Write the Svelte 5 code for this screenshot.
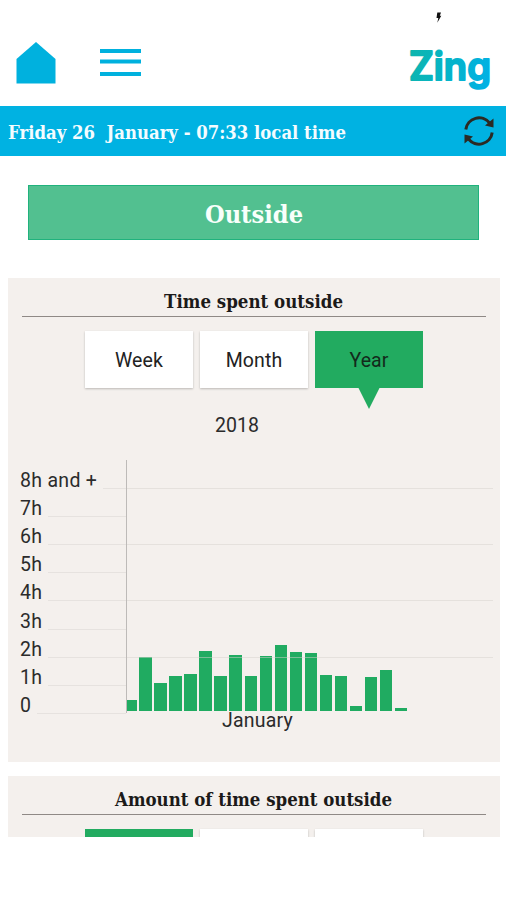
<script lang="ts">
  const periods = ["Week", "Month", "Year"];
  const hours = ["8h and +", "7h", "6h", "5h", "4h", "3h", "2h", "1h", "0"];

  // bar heights in px, one hour is 28px
  const days = [
    11, 54.5, 28, 35.5, 37.5, 60.5, 35.5, 56.5, 35, 55, 66.5, 59, 58, 36.5,
    35.5, 5.5, 34, 41, 3.5,
  ];

  let selected = "Year";
  let amountSelected = "Week";
</script>

<main>
  <div class="status">
    <svg width="8" height="12" viewBox="0 0 8 12">
      <path d="M2.3 .5H6L4.8 3.7H6.3L2.3 10.8L3.3 6H1.5z" fill="#111" />
    </svg>
  </div>

  <header>
    <svg class="home" width="40" height="42" viewBox="0 0 40 42">
      <path d="M20 0L39.5 17V41.500H0.500V17z" fill="#00b1de" />
    </svg>
    <svg class="menu" width="41" height="30" viewBox="0 0 41 30">
      <path d="M0 3H41M0 13.500H41M0 26H41" stroke="#00b1de" stroke-width="4" />
    </svg>
    <svg class="logo" width="90" height="52" viewBox="0 0 90 52">
      <defs>
        <linearGradient id="zing" gradientUnits="userSpaceOnUse" x1="5" y1="0" x2="88" y2="20">
          <stop offset="0" stop-color="#0fb5ab" />
          <stop offset="0.5" stop-color="#05b4c8" />
          <stop offset="1" stop-color="#00b1e4" />
        </linearGradient>
      </defs>
      <text
        x="5"
        y="35.500"
        textLength="82"
        lengthAdjust="spacingAndGlyphs"
        fill="url(#zing)"
        stroke="url(#zing)">Zing</text
      >
    </svg>
  </header>

  <div class="date">
    <svg class="slab" width="350" height="40">
      <text x="0" y="28" textLength="338" lengthAdjust="spacingAndGlyphs"
        >Friday 26&nbsp; January - 07:33 local time</text
      >
    </svg>
    <svg class="refresh" width="32" height="32" viewBox="0 0 32 32">
      <g fill="none" stroke="#2b2a24" stroke-width="3">
        <path d="M2.800 14.500A13.300 13.300 0 0 1 26.500 8" />
        <path d="M29.200 17.500A13.300 13.300 0 0 1 5.500 24" />
      </g>
      <path d="M30.500 3.500V12.500L22 10.500zM1.500 28.500V19.500L10 21.500z" fill="#2b2a24" />
    </svg>
  </div>

  <div class="content">
    <div class="banner">
      <svg class="slab" width="110" height="44">
        <text x="6" y="32" textLength="98" lengthAdjust="spacingAndGlyphs">Outside</text>
      </svg>
    </div>

    <section class="card">
      <h2>
        <svg class="slab" width="200" height="36">
          <text x="10" y="28" textLength="179" lengthAdjust="spacingAndGlyphs"
            >Time spent outside</text
          >
        </svg>
      </h2>
      <div class="tabs">
        {#each periods as period}
          <button class:active={period === selected} on:click={() => (selected = period)}>
            {period}
          </button>
        {/each}
      </div>
      <div class="year">2018</div>

      <div class="chart">
        <div class="hours">
          {#each hours as hour}
            <div class="hour"><span>{hour}</span><i></i></div>
          {/each}
        </div>
        <div class="plot">
          <div class="bars">
            {#each days as height}
              <div class="bar" style="height: {height}px"></div>
            {/each}
          </div>
          <div class="lines"><i></i><i></i><i></i><i></i></div>
        </div>
      </div>
      <div class="month">January</div>
    </section>

    <section class="card">
      <h2>
        <svg class="slab" width="300" height="36">
          <text x="11" y="28" textLength="277" lengthAdjust="spacingAndGlyphs"
            >Amount of time spent outside</text
          >
        </svg>
      </h2>
      <div class="tabs">
        {#each periods as period}
          <button
            class:active={period === amountSelected}
            on:click={() => (amountSelected = period)}
          >
            {period}
          </button>
        {/each}
      </div>
    </section>
  </div>
</main>

<style>
  :global(body) {
    margin: 0;
    background: #fff;
  }

  main {
    width: 506px;
    height: 900px;
    overflow: hidden;
    font-family: Roboto, sans-serif;
    font-size: 19.5px;
    color: #2b2b2b;
  }

  svg {
    display: block;
    flex: none;
    overflow: visible;
  }

  .status {
    display: flex;
    justify-content: flex-end;
    height: 30px;
    padding: 12px 63px 0 0;
    box-sizing: border-box;
  }

  header {
    display: flex;
    align-items: flex-start;
    height: 76px;
    padding: 12px 12px 0 16px;
    box-sizing: border-box;
  }

  .menu {
    margin: 6px 0 0 44px;
  }

  .logo {
    margin: 2px 0 0 auto;
  }

  .logo text {
    font: 600 39px Inter, sans-serif;
    stroke-width: 2;
    stroke-linejoin: round;
  }

  .slab text {
    font: 700 18px "DejaVu Serif", serif;
    fill: #1c1a19;
  }

  .date {
    display: flex;
    align-items: center;
    justify-content: space-between;
    height: 50px;
    padding: 0 11px 0 8px;
    background: #00b2e2;
  }

  .date .slab text {
    fill: #f4fcff;
  }

  .content {
    height: 681px;
    padding: 29px 6px 0 8px;
    box-sizing: border-box;
    overflow: hidden;
  }

  .banner {
    display: flex;
    align-items: center;
    justify-content: center;
    height: 55px;
    margin: 0 21px 38px 20px;
    border: 1px solid #20b27d;
    box-sizing: border-box;
    background: #52c090;
  }

  .banner .slab text {
    font-size: 24px;
    fill: #f8fffb;
  }

  .card {
    height: 484px;
    margin-bottom: 14px;
    background: #f4f0ed;
    overflow: hidden;
  }

  h2 {
    display: flex;
    justify-content: center;
    height: 39px;
    margin: 0 14px 14px;
    padding-top: 2px;
    border-bottom: 1px solid #8f8986;
    box-sizing: border-box;
  }

  .tabs {
    display: flex;
    justify-content: center;
    gap: 7px;
  }

  button {
    position: relative;
    width: 108px;
    height: 57px;
    padding: 2px 0 0;
    border: 0;
    background: #fff;
    color: #222;
    font: 19.5px Roboto, sans-serif;
    letter-spacing: 0.1px;
    box-shadow: 0 1px 2px #bbb8b5;
  }

  button.active {
    background: #22ab60;
    color: #13291b;
    box-shadow: none;
  }

  button.active::after {
    content: "";
    position: absolute;
    top: 56px;
    left: 43px;
    border: solid transparent;
    border-width: 22px 11px 0;
    border-top-color: #22ab60;
  }

  .year {
    height: 47px;
    margin: 25px 34px 0 0;
    line-height: 26px;
    text-align: center;
  }

  .chart {
    display: flex;
    height: 253px;
  }

  .hours {
    width: 119px;
    padding-top: 1px;
    border-right: 1px solid #bdbab8;
    box-sizing: border-box;
  }

  .hour {
    display: flex;
    align-items: flex-end;
    height: 28.1px;
    padding-left: 12px;
    gap: 6px;
    letter-spacing: 0.3px;
  }

  .hour span {
    line-height: 17px;
  }

  .hour i {
    flex: 1;
    height: 1px;
    background: #e6e2df;
  }

  .plot {
    display: grid;
    width: 366px;
  }

  .bars,
  .lines {
    grid-area: 1 / 1;
  }

  .bars {
    display: flex;
    align-items: flex-end;
    gap: 2.4px;
    padding-bottom: 2px;
  }

  .bar {
    width: 12.63px;
    background: #20ab61;
  }

  .bar:first-child {
    width: 10px;
  }

  .lines {
    padding-top: 28px;
  }

  .lines i {
    display: block;
    height: 1px;
    margin-bottom: 55.2px;
    background: rgba(214, 209, 205, 0.5);
  }

  .month {
    padding-left: 214px;
    line-height: 16px;
    letter-spacing: 0.2px;
  }
</style>
